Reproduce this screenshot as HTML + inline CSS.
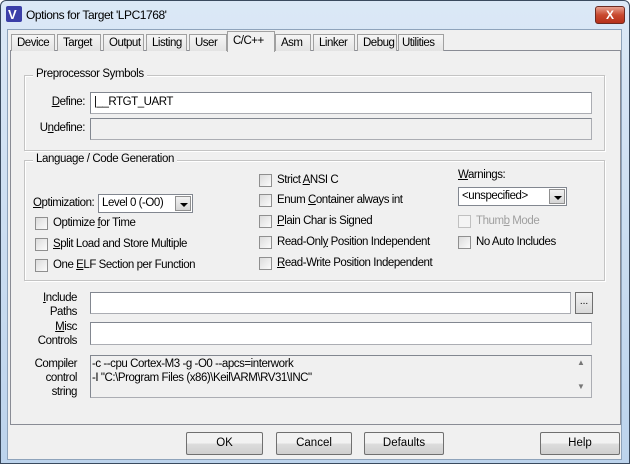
<!DOCTYPE html>
<html><head><style>
*{box-sizing:border-box;margin:0;padding:0}
body{width:630px;height:464px;overflow:hidden;font-family:"Liberation Sans",sans-serif;font-size:11.5px;color:#000;background:#fff}
.win{position:absolute;left:0;top:0;width:630px;height:464px;background:linear-gradient(#dbe8f6,#bcd3ec);border:1px solid #3a4a5e;border-radius:6px 6px 0 0}
.client{position:absolute;left:7px;top:29px;width:615px;height:431px;background:#f0f0f0;border:1px solid #8ea3bb}
.a{position:absolute}
.t{position:absolute;white-space:nowrap;letter-spacing:-0.45px}
.r{position:absolute;white-space:nowrap;letter-spacing:-0.45px;text-align:right}
.tab{position:absolute;top:34px;height:17px;border:1px solid #a0a0a0;border-bottom:none;background:linear-gradient(#f6f6f6,#e3e3e3);padding:2px 0 0 5px;letter-spacing:-0.5px;white-space:nowrap}
.page{position:absolute;left:10px;top:50px;width:611px;height:375px;border:1px solid #898c95;background:#f0f0f0}
.grp{position:absolute;border:1px solid #c4c4c4;box-shadow:1px 1px 0 #fff, inset 1px 1px 0 #fff}
.gt{position:absolute;background:#f0f0f0;padding:0 3px;white-space:nowrap;letter-spacing:-0.4px}
.in{position:absolute;background:#fff;border:1px solid #abadb3;border-top-color:#828790;border-left-color:#828790}
.dis{background:#f0f0f0}
.cb{position:absolute;width:13px;height:13px;border:1px solid #8f8f8f;background:linear-gradient(135deg,#dcdcdc,#fbfbfb)}
.btn{position:absolute;top:432px;height:23px;border:1px solid #707070;background:linear-gradient(#f2f2f2 50%,#dddddd 50%,#cfcfcf);text-align:center;line-height:20px;border-radius:2px}
.sel{position:absolute;background:#fff;border:1px solid #828790}
.arr{position:absolute;right:1px;top:1px;width:16px;background:linear-gradient(#f2f2f2,#d5d5d5);border:1px solid #8f8f8f}
.arr:after{content:"";position:absolute;left:4px;top:6px;border-left:4px solid transparent;border-right:4px solid transparent;border-top:4px solid #000}
u{text-decoration:underline}
</style></head><body>
<div class="win">
 <svg class="a" style="left:5px;top:5px" width="16" height="16"><rect width="16" height="16" rx="2" fill="#3b3fa8"/><text x="2" y="13" font-size="13" font-weight="bold" fill="#fff" font-family="Liberation Sans">V</text></svg>
 <div class="t" style="left:25px;top:7px;font-size:12px">Options for Target 'LPC1768'</div>
 <div class="a" style="left:594px;top:5px;width:30px;height:18px;border:1px solid #6d2b22;border-radius:3px;background:linear-gradient(#e7a08f,#c8492f 50%,#b7301a);color:#fff;font-weight:bold;text-align:center;line-height:16px;font-size:12px">X</div>
</div>
<div class="client"></div>
<div class="page"></div>
<div class="tab" style="left:11px;width:44px">Device</div>
<div class="tab" style="left:57px;width:44px">Target</div>
<div class="tab" style="left:103px;width:41px">Output</div>
<div class="tab" style="left:146px;width:41px">Listing</div>
<div class="tab" style="left:189px;width:38px">User</div>
<div class="tab" style="left:275px;width:36px">Asm</div>
<div class="tab" style="left:313px;width:42px">Linker</div>
<div class="tab" style="left:357px;width:40px">Debug</div>
<div class="tab" style="left:398px;width:46px;padding-left:3px">Utilities</div>
<div class="tab" style="left:227px;top:31px;height:21px;width:48px;background:#f0f0f0;padding-top:3px">C/C++</div>

<div class="grp" style="left:24px;top:75px;width:581px;height:76px"></div>
<div class="gt" style="left:33px;top:68px">Preprocessor Symbols</div>
<div class="r" style="right:545px;top:96px"><u>D</u>efine:</div>
<div class="in" style="left:90px;top:92px;width:502px;height:22px"><span class="t" style="left:3px;top:3px">|__RTGT_UART</span></div>
<div class="r" style="right:545px;top:122px">U<u>n</u>define:</div>
<div class="in dis" style="left:90px;top:118px;width:502px;height:22px"></div>

<div class="grp" style="left:24px;top:160px;width:581px;height:121px"></div>
<div class="gt" style="left:33px;top:153px">Language / Code Generation</div>
<div class="t" style="left:33px;top:197px"><u>O</u>ptimization:</div>
<div class="sel" style="left:98px;top:194px;width:95px;height:19px"><span class="t" style="left:3px;top:2px">Level 0 (-O0)</span><div class="arr" style="height:15px"></div></div>
<div class="cb" style="left:35px;top:217px"></div><div class="t" style="left:53px;top:217px">Optimize <u>f</u>or Time</div>
<div class="cb" style="left:35px;top:238px"></div><div class="t" style="left:53px;top:238px"><u>S</u>plit Load and Store Multiple</div>
<div class="cb" style="left:35px;top:259px"></div><div class="t" style="left:53px;top:259px">One <u>E</u>LF Section per Function</div>

<div class="cb" style="left:259px;top:174px"></div><div class="t" style="left:277px;top:174px">Strict <u>A</u>NSI C</div>
<div class="cb" style="left:259px;top:194px"></div><div class="t" style="left:277px;top:194px">Enum <u>C</u>ontainer always int</div>
<div class="cb" style="left:259px;top:215px"></div><div class="t" style="left:277px;top:215px"><u>P</u>lain Char is Signed</div>
<div class="cb" style="left:259px;top:236px"></div><div class="t" style="left:277px;top:236px">Read-Onl<u>y</u> Position Independent</div>
<div class="cb" style="left:259px;top:257px"></div><div class="t" style="left:277px;top:257px"><u>R</u>ead-Write Position Independent</div>

<div class="t" style="left:458px;top:169px"><u>W</u>arnings:</div>
<div class="sel" style="left:458px;top:187px;width:109px;height:19px"><span class="t" style="left:3px;top:2px">&lt;unspecified&gt;</span><div class="arr" style="height:15px"></div></div>
<div class="cb" style="left:458px;top:215px;border-color:#c0c0c0;background:#f4f4f4"></div><div class="t" style="left:476px;top:215px;color:#a0a0a0">Thum<u>b</u> Mode</div>
<div class="cb" style="left:458px;top:236px"></div><div class="t" style="left:476px;top:236px">No Auto Includes</div>

<div class="r" style="right:553px;top:292px"><u>I</u>nclude</div>
<div class="r" style="right:553px;top:306px">Paths</div>
<div class="in" style="left:90px;top:292px;width:481px;height:22px"></div>
<div class="a" style="left:575px;top:292px;width:18px;height:22px;border:1px solid #707070;background:linear-gradient(#f2f2f2,#d8d8d8);text-align:center;font-size:10px;line-height:18px">...</div>
<div class="r" style="right:553px;top:321px"><u>M</u>isc</div>
<div class="r" style="right:553px;top:335px">Controls</div>
<div class="in" style="left:90px;top:322px;width:502px;height:23px"></div>
<div class="r" style="right:553px;top:358px">Compiler</div>
<div class="r" style="right:553px;top:372px">control</div>
<div class="r" style="right:553px;top:386px">string</div>
<div class="in dis" style="left:90px;top:355px;width:502px;height:43px">
 <div class="t" style="left:1px;top:2px">-c --cpu Cortex-M3 -g -O0 --apcs=interwork</div>
 <div class="t" style="left:1px;top:16px">-I "C:\Program Files (x86)\Keil\ARM\RV31\INC"</div>
 <div class="t" style="left:486px;top:2px;font-size:8px;color:#777">▲</div>
 <div class="t" style="left:486px;top:26px;font-size:8px;color:#777">▼</div>
</div>

<div class="btn" style="left:186px;width:77px">OK</div>
<div class="btn" style="left:276px;width:76px">Cancel</div>
<div class="btn" style="left:364px;width:80px">Defaults</div>
<div class="btn" style="left:540px;width:80px">Help</div>
</body></html>
